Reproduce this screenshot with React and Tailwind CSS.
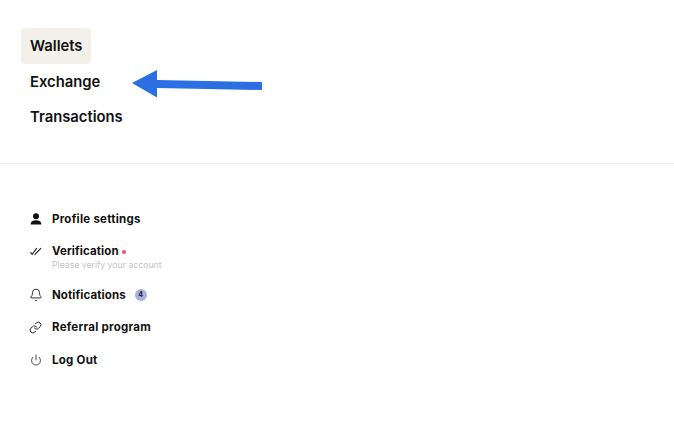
import { Bell, Link, Power } from 'lucide-react';

const font = { fontFamily: 'Inter, "Liberation Sans", sans-serif' };

function UserIcon() {
  return (
    <svg width="12" height="12" viewBox="0 0 12 12" fill="#111">
      <circle cx="6" cy="3.2" r="3" />
      <path d="M0.6 11.5c0-2.8 2-4.2 5.4-4.2s5.4 1.4 5.4 4.2z" />
    </svg>
  );
}

function ChecksIcon() {
  return (
    <svg width="12" height="10" viewBox="0 0 12 10" fill="none" stroke="#222" strokeWidth="1.1" strokeLinecap="round">
      <path d="M0.8 6.6l1.4 1.8L6.6 2.4" />
      <path d="M5 8.4L10.8 2.4" />
    </svg>
  );
}

function MenuRow({ icon, label, className, children }) {
  return (
    <div className={'flex items-start ' + className}>
      <div className="w-[21px] h-[16px] shrink-0 flex items-center justify-center">{icon}</div>
      <div className="ml-[6px]">{children || <div className="text-[11.5px] leading-[16px] font-bold text-[#111] tracking-[0.25px]">{label}</div>}</div>
    </div>
  );
}

export default function App() {
  return (
    <div className="relative w-[674px] h-[425px] bg-white overflow-hidden" style={font}>
      <nav className="flex flex-col items-start pl-[21px] pt-[28px] h-[163px] text-[14.8px] font-semibold text-[#111]">
        <a className="h-[36px] w-[70px] flex items-center px-[9px] rounded-[3px] bg-[#f2f0e9]">Wallets</a>
        <a className="h-[35px] mt-[1px] flex items-center px-[9px]">Exchange</a>
        <a className="h-[35px] flex items-center px-[9px]">Transactions</a>
      </nav>

      <svg className="absolute left-[130px] top-[68px]" width="134" height="32" viewBox="0 0 134 32" fill="#2b6fe3">
        <path d="M2 15L27 2v10l105 2v8L27 20v9.5z" />
      </svg>

      <div className="h-px bg-[#eeeeee]" />

      <div className="flex flex-col pl-[25px] pt-[47px]">
        <MenuRow icon={<UserIcon />} label="Profile settings" className="h-[32px]" />
        <MenuRow
          icon={<ChecksIcon />}
          className="h-[44px]"
        >
          <div className="text-[11.5px] leading-[16px] font-bold text-[#111] tracking-[0.1px] flex items-center">
            Verification
            <span className="ml-[3px] mt-[2px] w-[4px] h-[4px] rounded-full bg-[#e0566e]" />
          </div>
          <div className="text-[8.7px] leading-[11px] mt-[1px] text-[#c2c2c2]">Please verify your account</div>
        </MenuRow>
        <MenuRow
          icon={<Bell size={14} strokeWidth={1.6} color="#222" />}
          className="h-[32px]"
        >
          <div className="text-[11.5px] leading-[16px] font-bold text-[#111] tracking-[0.1px] flex items-center">
            Notifications
            <span className="ml-[9px] w-[12px] h-[12px] rounded-full bg-[#aab0e0] text-[7px] leading-[12px] text-center font-bold text-[#222]">4</span>
          </div>
        </MenuRow>
        <MenuRow icon={<Link size={13} strokeWidth={1.8} color="#222" />} label="Referral program" className="h-[33px]" />
        <MenuRow icon={<Power size={12} strokeWidth={1.6} color="#222" />} label="Log Out" className="h-[32px]" />
      </div>
    </div>
  );
}
